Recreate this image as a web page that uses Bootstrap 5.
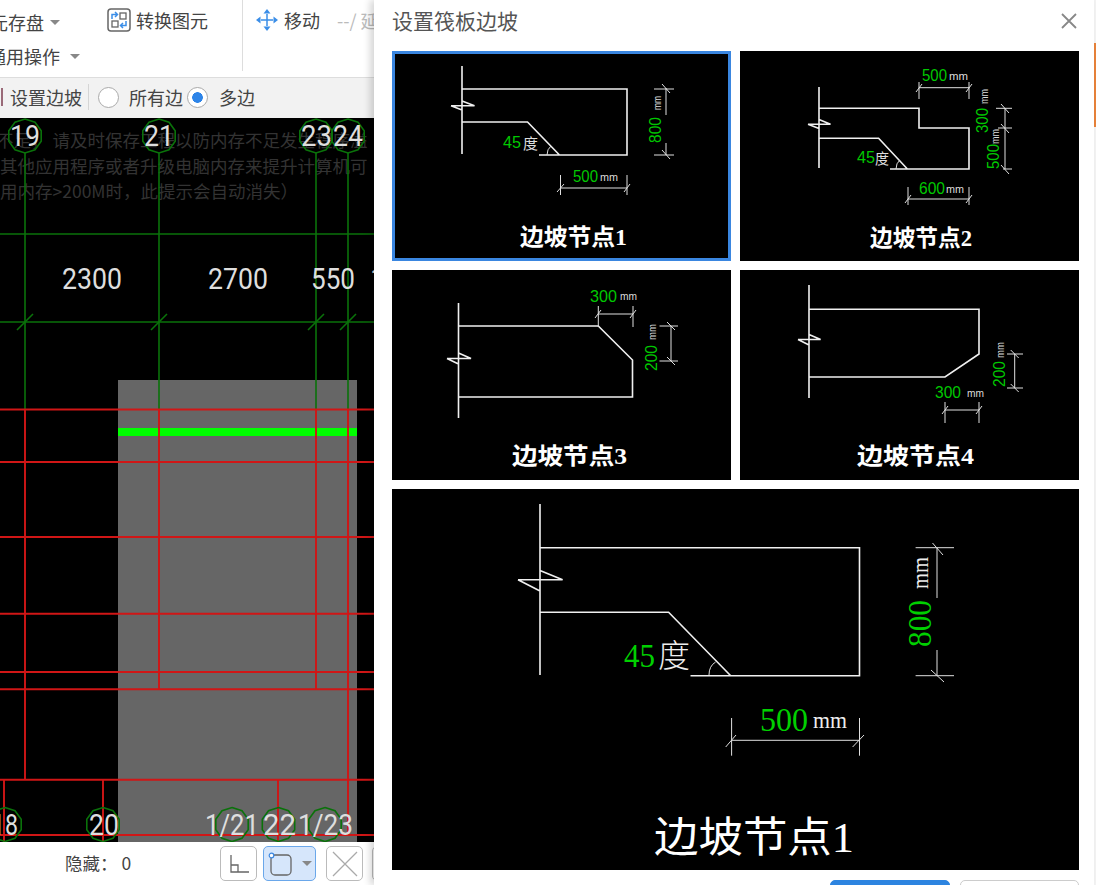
<!DOCTYPE html>
<html lang="zh-CN">
<head>
    <meta charset="UTF-8">
    <meta name="viewport" content="width=device-width, initial-scale=1.0">
    <title>设置筏板边坡</title>
    <link href="https://cdn.jsdelivr.net/npm/bootstrap@5.3.0/dist/css/bootstrap.min.css" rel="stylesheet">
    <style>
        body{
            width: 1096px;
            height: 885px;
            overflow: hidden;
            background: #eee;
            color: #444;
            font-family: "Noto Sans CJK SC", "Liberation Sans", sans-serif;
        }
        .left-pane{ width: 374px; height: 885px; overflow: hidden; background: #fff; }
        .ribbon{ height: 78px; border-bottom: 1px solid #ddd; font-size: 18px; line-height: 24px; white-space: nowrap; }
        .ribbon-stack{ width: 107px; flex: none; padding-top: 10px; gap: 10px; }
        .ribbon-first{ margin-left: -10px; }
        .ribbon-second{ margin-left: -12px; }
        .ribbon-second .ribbon-caret{ margin-left: 10px; }
        .ribbon-caret{ width: 0; height: 0; border-left: 5px solid transparent; border-right: 5px solid transparent; border-top: 5px solid #888; margin-left: 6px; }
        .ribbon-convert{ width: 136px; flex: none; height: 71px; padding-top: 8px; gap: 5px; border-right: 1px solid #ddd; }
        .ribbon-move{ padding: 8px 0 0 12px; gap: 5px; }
        .ribbon-faded{ color: #bbb; margin-left: 12px; }
        .option-bar{ height: 40px; background: #f2f2f2; font-size: 18px; padding: 0 0 2px 1px; white-space: nowrap; }
        .option-mark{ width: 2px; height: 18px; background: #9a6a78; margin-right: 7px; }
        .option-sep{ width: 1px; height: 26px; background: #d5d5d5; margin: 0 9px 0 6px; }
        .option-radio{ width: 21px; height: 21px; margin: 0 10px 0 0; flex: none; border: 1px solid #aaa; box-shadow: none; }
        .option-radio:checked{ background: radial-gradient(circle, #2d84e8 0 5px, #fff 5.6px); border-color: #aaa; margin-right: 11px; }
        .option-gap{ margin-right: 4px; }
        .cad-canvas{ display: block; width: 374px; height: 724px; background: #000; }
        .status-bar{ height: 43px; background: #fff; font-size: 17.5px; padding-left: 65px; }
        .status-label{ width: 155px; flex: none; }
        .status-btn{ height: 35px; width: 37px; padding: 0; border: 1px solid #bbb; border-radius: 5px; background: #fff; margin-right: 6px; flex: none; }
        .status-btn-on{ width: 53px; background: #d6e6fb; border-color: #6aa7ea; margin-right: 10px; }
        .status-btn-last{ margin-right: 9px; }
        .dialog-pane{ width: 720px; height: 885px; background: #fff; padding-left: 18px; box-shadow: -4px 0 7px rgba(0,0,0,.16); z-index: 2; }
        .dialog-head{ height: 51px; padding: 0 16px 9px 0; }
        .dialog-title{ font-size: 21px; color: #555; }
        .node-grid{ display: grid; grid-template-columns: 339px 339px; grid-template-rows: 210px 210px 381px; gap: 9px; }
        .node-tile{ position: relative; background: #000; }
        .node-tile svg{ display: block; width: 100%; height: 100%; }
        .node-active{ outline: 3px solid #3a86e0; outline-offset: -3px; }
        .node-large{ grid-column: 1 / -1; }
        .dialog-foot{ gap: 10px; margin-top: 10px; padding-left: 438px; }
        .foot-btn{ width: 120px; height: 34px; padding: 0; border-radius: 5px; font-size: 15px; }
        .foot-primary{ background: #2d84e0; border-color: #2d84e0; }
        .foot-plain{ width: 119px; background: #fff; border-color: #ccc; color: #444; }
        .edge-strip{ width: 2px; height: 885px; background: #f3f3f3; padding-top: 43px; }
        .edge-mark{ height: 84px; background: #e8833a; }
        .ln{ stroke: #f0f0f0; stroke-width: 1.6; fill: none; }
        .ln-thin{ stroke: #e0e0e0; stroke-width: 1; fill: none; }
        .num{ fill: #00c800; font-family: "Liberation Sans", sans-serif; font-size: 16px; }
        .num-big{ fill: #00d000; font-family: "Liberation Serif", serif; font-size: 33px; }
        .unit{ fill: #ddd; font-family: "Liberation Sans", sans-serif; font-size: 11px; }
        .unit-big{ fill: #eee; font-family: "Liberation Serif", serif; font-size: 24px; }
        .deg{ fill: #ddd; font-family: "Noto Sans CJK SC", sans-serif; font-size: 15px; }
        .deg-big{ fill: #eee; font-family: "Noto Sans CJK SC", sans-serif; font-weight: 300; font-size: 32px; }
        .cap{ fill: #fff; font-family: "Liberation Serif", "Noto Sans CJK SC", serif; font-weight: 700; font-size: 23px; }
        .cap-big{ fill: #fff; font-family: "Liberation Serif", "Noto Sans CJK SC", serif; font-weight: 400; font-size: 42px; }
        .g{ stroke: #0a720a; stroke-width: 1.6; fill: none; }
        .r{ stroke: #d01616; stroke-width: 1.9; fill: none; }
        .axis{ fill: #dedede; font-family: Roboto, "Liberation Sans", sans-serif; font-weight: 400; font-size: 29px; }
        .faint{ fill: #333; font-family: "Noto Sans CJK SC", sans-serif; font-size: 17.5px; }
    </style>
</head>
<body>
<div class="d-flex">
    <div class="left-pane d-flex flex-column flex-none">
        <div class="ribbon d-flex">
            <div class="ribbon-stack d-flex flex-column">
                <div class="d-flex align-items-center ribbon-first">元存盘<span class="ribbon-caret"></span></div>
                <div class="d-flex align-items-center ribbon-second">通用操作<span class="ribbon-caret"></span></div>
            </div>
            <div class="ribbon-convert d-flex align-items-start">
                <svg width="24" height="24" viewBox="0 0 24 24">
                    <rect x="1" y="1" width="22" height="22" rx="3" fill="#fff" stroke="#666" stroke-width="1.5"/>
                    <rect x="13" y="5" width="6" height="6" fill="none" stroke="#666" stroke-width="1.3"/>
                    <rect x="5" y="13" width="6" height="6" fill="none" stroke="#666" stroke-width="1.3"/>
                    <path d="M5 11V6.500H10M8 4L10.500 6.500L8 9" fill="none" stroke="#3b8ee8" stroke-width="1.5"/>
                    <path d="M19 13V17.500H14M16 15L13.500 17.500L16 20" fill="none" stroke="#3b8ee8" stroke-width="1.5"/>
                </svg>
                <span>转换图元</span>
            </div>
            <div class="ribbon-move d-flex align-items-start">
                <svg width="24" height="24" viewBox="0 0 24 24" fill="#3b8ee8">
                    <path d="M12 6V18M6 12H18" stroke="#3b8ee8" stroke-width="1.5"/>
                    <path d="M12 1L15.500 5.500H8.500Z"/>
                    <path d="M12 23L15.500 18.500H8.500Z"/>
                    <path d="M1 12L5.500 8.500V15.500Z"/>
                    <path d="M23 12L18.500 8.500V15.500Z"/>
                </svg>
                <span>移动</span>
                <span class="ribbon-faded">--/ 延伸</span>
            </div>
        </div>
        <div class="option-bar d-flex align-items-center">
            <span class="option-mark"></span>
            <span>设置边坡</span>
            <span class="option-sep"></span>
            <input class="form-check-input option-radio" type="radio" name="edgeMode">
            <span class="option-gap">所有边</span>
            <input class="form-check-input option-radio" type="radio" name="edgeMode" checked>
            <span>多边</span>
        </div>
        <svg class="cad-canvas" viewBox="0 118 374 724">
            <defs>
                <polygon id="bubble" points="0,-17 10,-13.800 16.200,-5.250 16.200,5.250 10,13.800 0,17 -10,13.800 -16.200,5.250 -16.200,-5.250 -10,-13.800" fill="none" stroke="#0a720a" stroke-width="1.6"/>
            </defs>
            <text class="faint" x="-4" y="147">不足， 请及时保存工程以防内存不足发生程序溢</text>
            <text class="faint" x="0" y="173">其他应用程序或者升级电脑内存来提升计算机可</text>
            <text class="faint" x="0" y="198">用内存&gt;200M时，此提示会自动消失）</text>

            <rect x="118" y="380" width="239" height="462" fill="#666"/>
            <path class="g" d="M0 234H374M0 322H374M25 153V409M159 153V409M316 153V409M348 153V409"/>
            <path class="g" d="M17 330L33 314M151 330L167 314M308 330L324 314M340 330L356 314"/>
            <rect x="118" y="428" width="239" height="8" fill="#0f0"/>
            <path class="r" d="M0 409.500H374M0 462H374M0 537H374M0 613.700H374M0 672H374M0 689.300H374M0 779.700H374M0 835H374"/>
            <path class="r" d="M25 409V780M159 409V689M316 409V689M348 409V835M4 780V842M103 780V842M278 780V842"/>

            <use href="#bubble" x="25" y="136"/>
            <use href="#bubble" x="159" y="136"/>
            <use href="#bubble" x="316" y="136"/>
            <use href="#bubble" x="348" y="136"/>
            <use href="#bubble" x="5" y="824.500"/>
            <use href="#bubble" x="103" y="824.500"/>
            <use href="#bubble" x="232" y="824.500"/>
            <use href="#bubble" x="278.500" y="824.500"/>
            <use href="#bubble" x="325" y="824.500"/>

            <text class="axis" x="10" y="146" textLength="30" lengthAdjust="spacingAndGlyphs">19</text>
            <text class="axis" x="144" y="146" textLength="30" lengthAdjust="spacingAndGlyphs">21</text>
            <text class="axis" x="301" y="146" textLength="31" lengthAdjust="spacingAndGlyphs">23</text>
            <text class="axis" x="333" y="146" textLength="30" lengthAdjust="spacingAndGlyphs">24</text>
            <text class="axis" x="62" y="289" textLength="60" lengthAdjust="spacingAndGlyphs">2300</text>
            <text class="axis" x="208" y="289" textLength="60" lengthAdjust="spacingAndGlyphs">2700</text>
            <text class="axis" x="311" y="289" textLength="44" lengthAdjust="spacingAndGlyphs">550</text>
            <text class="axis" x="370" y="289">1</text>
            <text class="axis" x="-8" y="835" textLength="26" lengthAdjust="spacingAndGlyphs">18</text>
            <text class="axis" x="89" y="835" textLength="30" lengthAdjust="spacingAndGlyphs">20</text>
            <text class="axis" x="205" y="835" textLength="54" lengthAdjust="spacingAndGlyphs">1/21</text>
            <text class="axis" x="263" y="835" textLength="33" lengthAdjust="spacingAndGlyphs">22</text>
            <text class="axis" x="298" y="835" textLength="55" lengthAdjust="spacingAndGlyphs">1/23</text>
        </svg>
        <div class="status-bar d-flex align-items-center">
            <span class="status-label">隐藏： 0</span>
            <button class="status-btn d-flex align-items-center justify-content-center" type="button">
                <svg width="24" height="24" viewBox="0 0 24 24" fill="none" stroke="#666" stroke-width="1.3">
                    <path d="M4 3V20H22M4 13H11V20"/>
                </svg>
            </button>
            <button class="status-btn status-btn-on d-flex align-items-center justify-content-center gap-2" type="button">
                <svg width="26" height="26" viewBox="0 0 26 26" fill="none">
                    <rect x="3" y="4" width="20" height="20" rx="4" stroke="#666" stroke-width="1.3"/>
                    <circle cx="3.500" cy="4.500" r="2.300" fill="#fff" stroke="#3a86e0" stroke-width="1.2"/>
                </svg>
                <span class="ribbon-caret m-0"></span>
            </button>
            <button class="status-btn status-btn-last d-flex align-items-center justify-content-center" type="button">
                <svg width="28" height="28" viewBox="0 0 28 28" stroke="#aaa" stroke-width="1.3"><path d="M2 2L26 26M26 2L2 26"/></svg>
            </button>
            <button class="status-btn" type="button"></button>
        </div>
    </div>

    <div class="dialog-pane flex-none">
        <div class="dialog-head d-flex align-items-center justify-content-between">
            <span class="dialog-title">设置筏板边坡</span>
            <svg width="18" height="18" viewBox="0 0 18 18" stroke="#888" stroke-width="1.8"><path d="M2 2L16 16M16 2L2 16"/></svg>
        </div>
        <div class="node-grid">
            <div class="node-tile node-active">
                <svg viewBox="392 51 339 210">
                    <path class="ln" d="M462 66V154M462 89H627V155H539M462 122H527.500L559.500 155M451 105.700H474.500L462 101M451 105.700L462 110"/>
                    <path class="ln-thin" d="M547 155Q547 149 551 146M666 88V115M666 143V155M654 89H674M654 155H674M662 84L670 93M662 150L670 159M560.500 175V195M627 175V195M560.500 188H627M557 192L564 184M624 192L630 184"/>
                    <text class="num" x="503" y="148" textLength="18" lengthAdjust="spacingAndGlyphs">45</text>
                    <text class="deg" x="523" y="149" textLength="15" lengthAdjust="spacingAndGlyphs">度</text>
                    <text class="num" x="573" y="182" textLength="25" lengthAdjust="spacingAndGlyphs">500</text>
                    <text class="unit" x="600" y="181" textLength="18" lengthAdjust="spacingAndGlyphs">mm</text>
                    <text class="num" transform="translate(661 143) rotate(-90)" textLength="26" lengthAdjust="spacingAndGlyphs">800</text>
                    <text class="unit" transform="translate(661 110) rotate(-90)" textLength="14" lengthAdjust="spacingAndGlyphs">mm</text>
                    <text class="cap" x="520" y="245" textLength="107" lengthAdjust="spacingAndGlyphs">边坡节点1</text>
                </svg>
            </div>
            <div class="node-tile">
                <svg viewBox="740 51 339 210">
                    <path class="ln" d="M819 87V168M819 108.300H919V128H969V169H890M819 138.300H878.600L907.400 169M808 124.300H830.500L819 119.500M808 124.300L819 128.500"/>
                    <path class="ln-thin" d="M896 169Q896 163 900 160M919 82V99M969 82V99M919 87.700H969M916 92L922 84M966 92L972 84M1005 108V169M996 108.300H1012M998 128H1012M1003 169H1012M1001 104L1009 113M1001 124L1009 133M1001 165L1009 174M908 187V205M969 187V205M908 199H969M905 203L911 195M966 203L972 195"/>
                    <text class="num" x="857" y="163" textLength="18" lengthAdjust="spacingAndGlyphs">45</text>
                    <text class="deg" x="875" y="164" textLength="14" lengthAdjust="spacingAndGlyphs">度</text>
                    <text class="num" x="922" y="81" textLength="25" lengthAdjust="spacingAndGlyphs">500</text>
                    <text class="unit" x="949" y="80" textLength="19" lengthAdjust="spacingAndGlyphs">mm</text>
                    <text class="num" x="919" y="194" textLength="26" lengthAdjust="spacingAndGlyphs">600</text>
                    <text class="unit" x="946" y="193" textLength="18" lengthAdjust="spacingAndGlyphs">mm</text>
                    <text class="num" transform="translate(988 133) rotate(-90)" textLength="25" lengthAdjust="spacingAndGlyphs">300</text>
                    <text class="unit" transform="translate(988 104) rotate(-90)" textLength="15" lengthAdjust="spacingAndGlyphs">mm</text>
                    <text class="num" transform="translate(999 169) rotate(-90)" textLength="25" lengthAdjust="spacingAndGlyphs">500</text>
                    <text class="unit" transform="translate(999 144) rotate(-90)" textLength="15" lengthAdjust="spacingAndGlyphs">mm</text>
                    <text class="cap" x="870" y="246" textLength="102" lengthAdjust="spacingAndGlyphs">边坡节点2</text>
                </svg>
            </div>
            <div class="node-tile">
                <svg viewBox="392 270 339 210">
                    <path class="ln" d="M458.500 303V418M458.500 326H598.300L632.500 360V397H458.500M447 358.500H471L458.500 353M447 358.500L458.500 364"/>
                    <path class="ln-thin" d="M598.300 306V327M633 306V327M598.300 314H633M595 318L601 310M630 318L636 310M671 326V361M659.500 326H678M659.500 361H678M667 322L675 330M667 357L675 365"/>
                    <text class="num" x="590" y="302" textLength="27" lengthAdjust="spacingAndGlyphs">300</text>
                    <text class="unit" x="620" y="300" textLength="17" lengthAdjust="spacingAndGlyphs">mm</text>
                    <text class="num" transform="translate(657 371) rotate(-90)" textLength="26" lengthAdjust="spacingAndGlyphs">200</text>
                    <text class="unit" transform="translate(656 340) rotate(-90)" textLength="16" lengthAdjust="spacingAndGlyphs">mm</text>
                    <text class="cap" x="512" y="464" textLength="115" lengthAdjust="spacingAndGlyphs">边坡节点3</text>
                </svg>
            </div>
            <div class="node-tile">
                <svg viewBox="740 270 339 210">
                    <path class="ln" d="M809 285V398M809 309.300H979V354L945 377H809M798 339.500H820.600L809 334.500M798 339.500L809 345"/>
                    <path class="ln-thin" d="M945 402V423M979 402V423M945 410H979M942 414L948 406M976 414L982 406M1014.700 354V388M1007 354H1023M1007 388H1023M1010.700 350L1018.700 358M1010.700 384L1018.700 392"/>
                    <text class="num" x="935" y="398" textLength="26" lengthAdjust="spacingAndGlyphs">300</text>
                    <text class="unit" x="967" y="397" textLength="17" lengthAdjust="spacingAndGlyphs">mm</text>
                    <text class="num" transform="translate(1005 387) rotate(-90)" textLength="26" lengthAdjust="spacingAndGlyphs">200</text>
                    <text class="unit" transform="translate(1004 358) rotate(-90)" textLength="16" lengthAdjust="spacingAndGlyphs">mm</text>
                    <text class="cap" x="857" y="464" textLength="117" lengthAdjust="spacingAndGlyphs">边坡节点4</text>
                </svg>
            </div>
            <div class="node-tile node-large">
                <svg viewBox="392 489 687 381">
                    <path class="ln" d="M540 504V675M540 547.700H859.500V675.700H690.500M540 612.300H668.600L730.700 675.700M518 579.700H562.600L540 570.500M518 579.700L540 591"/>
                    <path class="ln-thin" d="M709 675Q709 666 715.600 662M937 547.700V598M937 650V675.700M915.600 547.700H954M915.600 675.700H954M932.500 543L943 555M931 670L944 682M731.600 718V755.700M859.500 718V755.700M731.600 740.300H859.500M725.700 747L736 735M852.600 747L864 735"/>
                    <text class="num-big" x="624" y="667" textLength="31" lengthAdjust="spacingAndGlyphs">45</text>
                    <text class="deg-big" x="658" y="667" textLength="32" lengthAdjust="spacingAndGlyphs">度</text>
                    <text class="num-big" x="760" y="731" textLength="48" lengthAdjust="spacingAndGlyphs">500</text>
                    <text class="unit-big" x="813" y="728" textLength="34" lengthAdjust="spacingAndGlyphs">mm</text>
                    <text class="num-big" transform="translate(931 647) rotate(-90)" textLength="47" lengthAdjust="spacingAndGlyphs">800</text>
                    <text class="unit-big" transform="translate(928 589) rotate(-90)" textLength="32" lengthAdjust="spacingAndGlyphs">mm</text>
                    <text class="cap-big" x="654" y="852" textLength="200" lengthAdjust="spacingAndGlyphs">边坡节点1</text>
                </svg>
            </div>
        </div>
        <div class="dialog-foot d-flex">
            <button class="btn btn-primary foot-btn foot-primary" type="button">确定</button>
            <button class="btn foot-btn foot-plain" type="button">取消</button>
        </div>
    </div>

    <div class="edge-strip flex-none"><div class="edge-mark"></div></div>
</div>
<script src="https://cdn.jsdelivr.net/npm/bootstrap@5.3.0/dist/js/bootstrap.bundle.min.js"></script>
</body>
</html>
